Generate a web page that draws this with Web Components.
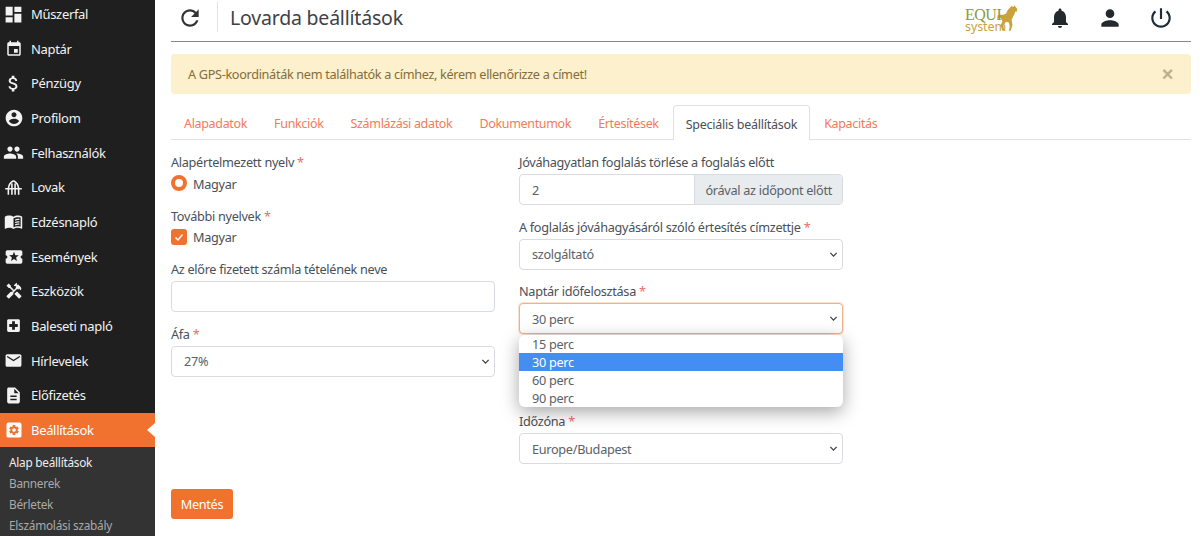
<!DOCTYPE html>
<html lang="hu">
<head>
<meta charset="utf-8">
<title>Lovarda beállítások</title>
<style>
html,body{margin:0;padding:0;height:536px;overflow:hidden;background:#fff}
body{font-family:"Noto Sans","Open Sans",sans-serif;font-size:13px;color:#495057;letter-spacing:-.3px}
</style>
</head>
<body>
<app-shell>
  <side-bar slot="side">
    <nav-item icon="dashboard" size="21">Műszerfal</nav-item>
    <nav-item icon="event" size="18">Naptár</nav-item>
    <nav-item icon="money" size="21">Pénzügy</nav-item>
    <nav-item icon="account" size="20">Profilom</nav-item>
    <nav-item icon="people" size="21">Felhasználók</nav-item>
    <nav-item icon="barn" size="19">Lovak</nav-item>
    <nav-item icon="book" size="19">Edzésnapló</nav-item>
    <nav-item icon="ticket" size="20">Események</nav-item>
    <nav-item icon="tools" size="18">Eszközök</nav-item>
    <nav-item icon="hospital" size="17">Baleseti napló</nav-item>
    <nav-item icon="mail" size="19">Hírlevelek</nav-item>
    <nav-item icon="doc" size="19">Előfizetés</nav-item>
    <nav-item icon="gear" size="18" active>Beállítások</nav-item>
    <sub-menu>
      <sub-item active>Alap beállítások</sub-item>
      <sub-item>Bannerek</sub-item>
      <sub-item>Bérletek</sub-item>
      <sub-item>Elszámolási szabály</sub-item>
    </sub-menu>
  </side-bar>
  <top-bar>Lovarda beállítások</top-bar>
  <alert-box>A GPS-koordináták nem találhatók a címhez, kérem ellenőrizze a címet!</alert-box>
  <tab-bar>
    <tab-link>Alapadatok</tab-link>
    <tab-link>Funkciók</tab-link>
    <tab-link>Számlázási adatok</tab-link>
    <tab-link>Dokumentumok</tab-link>
    <tab-link>Értesítések</tab-link>
    <tab-link active>Speciális beállítások</tab-link>
    <tab-link>Kapacitás</tab-link>
  </tab-bar>
  <settings-form>
    <form-field slot="left" label="Alapértelmezett nyelv" required><choice-mark type="radio">Magyar</choice-mark></form-field>
    <form-field slot="left" label="További nyelvek" required><choice-mark type="check">Magyar</choice-mark></form-field>
    <form-field slot="left" label="Az előre fizetett számla tételének neve"><text-box></text-box></form-field>
    <form-field slot="left" label="Áfa" required><select-box>27%</select-box></form-field>

    <form-field slot="right" label="Jóváhagyatlan foglalás törlése a foglalás előtt"><text-box addon="órával az időpont előtt">2</text-box></form-field>
    <form-field slot="right" label="A foglalás jóváhagyásáról szóló értesítés címzettje" required><select-box>szolgáltató</select-box></form-field>
    <form-field slot="right" label="Naptár időfelosztása" required class="open">
      <select-box focused>30 perc
        <drop-list slot="menu">
          <drop-option>15 perc</drop-option>
          <drop-option selected>30 perc</drop-option>
          <drop-option>60 perc</drop-option>
          <drop-option>90 perc</drop-option>
        </drop-list>
      </select-box>
    </form-field>
    <form-field slot="right" label="Időzóna" required><select-box>Europe/Budapest</select-box></form-field>
    <save-button slot="action">Mentés</save-button>
  </settings-form>
</app-shell>

<script>
const ICONS = {
  dashboard: '<path d="M3 13h8V3H3v10zm0 8h8v-6H3v6zm10 0h8V11h-8v10zm0-18v6h8V3h-8z"/>',
  event: '<path d="M17 12h-5v5h5v-5zM16 1v2H8V1H6v2H5c-1.11 0-1.99.9-1.99 2L3 19c0 1.1.89 2 2 2h14c1.1 0 2-.9 2-2V5c0-1.1-.9-2-2-2h-1V1h-2zm3 18H5V8h14v11z"/>',
  money: '<path d="M11.8 10.9c-2.27-.59-3-1.2-3-2.15 0-1.09 1.01-1.85 2.7-1.85 1.78 0 2.44.85 2.5 2.1h2.21c-.07-1.72-1.12-3.3-3.21-3.81V3h-3v2.16c-1.94.42-3.5 1.68-3.5 3.61 0 2.31 1.91 3.46 4.7 4.13 2.5.6 3 1.48 3 2.41 0 .69-.49 1.79-2.7 1.79-2.06 0-2.87-.92-2.98-2.1h-2.2c.12 2.19 1.76 3.42 3.68 3.83V21h3v-2.15c1.95-.37 3.5-1.5 3.5-3.55 0-2.84-2.43-3.81-4.7-4.4z"/>',
  account: '<path d="M12 2C6.48 2 2 6.48 2 12s4.48 10 10 10 10-4.48 10-10S17.52 2 12 2zm0 3c1.66 0 3 1.34 3 3s-1.34 3-3 3-3-1.34-3-3 1.34-3 3-3zm0 14.2c-2.5 0-4.71-1.28-6-3.22.03-1.99 4-3.08 6-3.08 1.99 0 5.97 1.09 6 3.08-1.29 1.94-3.5 3.22-6 3.22z"/>',
  people: '<path d="M16 11c1.66 0 2.99-1.34 2.99-3S17.66 5 16 5c-1.66 0-3 1.34-3 3s1.34 3 3 3zm-8 0c1.66 0 2.99-1.34 2.99-3S9.66 5 8 5C6.34 5 5 6.34 5 8s1.34 3 3 3zm0 2c-2.33 0-7 1.17-7 3.5V19h14v-2.5c0-2.33-4.67-3.5-7-3.5zm8 0c-.29 0-.62.02-.97.05 1.16.84 1.97 1.97 1.97 3.45V19h6v-2.5c0-2.33-4.67-3.5-7-3.5z"/>',
  barn: '<path fill="none" stroke="currentColor" stroke-width="2" d="M12 3.500C8 5.500 6 9 5.500 13v8M12 3.500C16 5.500 18 9 18.500 13v8M1.500 13.500h21M10 7v14M14 7v14"/>',
  book: '<path d="M21 5c-1.11-.35-2.33-.5-3.5-.5-1.95 0-4.05.4-5.5 1.5-1.45-1.1-3.55-1.5-5.5-1.5S2.45 4.9 1 6v14.65c0 .25.25.5.5.5.1 0 .15-.05.25-.05C3.1 20.45 5.05 20 6.5 20c1.95 0 4.05.4 5.5 1.5 1.35-.85 3.8-1.5 5.5-1.5 1.65 0 3.35.3 4.75 1.05.1.05.15.05.25.05.25 0 .5-.25.5-.5V6c-.6-.45-1.25-.75-2-1zm0 13.5c-1.1-.35-2.3-.5-3.5-.5-1.7 0-4.15.65-5.5 1.5V8c1.35-.85 3.8-1.5 5.5-1.5 1.2 0 2.4.15 3.5.5v11.5z"/><path d="M14 9.500c1.100-.5 3.400-1 5.500-.8v1.500c-1.900-.2-4.200.2-5.500.8V9.500zm0 3c1.100-.5 3.400-1 5.500-.8v1.500c-1.900-.2-4.200.2-5.500.8v-1.500zm0 3c1.100-.5 3.400-1 5.500-.8v1.500c-1.900-.2-4.200.2-5.500.8v-1.500z"/>',
  ticket: '<path d="M20 12c0-1.1.9-2 2-2V6c0-1.1-.9-2-2-2H4c-1.1 0-1.99.9-1.99 2v4c1.1 0 1.99.9 1.99 2s-.89 2-2 2v4c0 1.1.9 2 2 2h16c1.1 0 2-.9 2-2v-4c-1.1 0-2-.9-2-2zm-4.42 4.8L12 14.5l-3.58 2.3 1.08-4.12-3.29-2.69 4.24-.25L12 5.8l1.54 3.95 4.24.25-3.29 2.69 1.09 4.11z"/>',
  tools: '<path d="M21.67 18.17l-5.3-5.3h-.99l-2.54 2.54v.99l5.3 5.3c.39.39 1.02.39 1.41 0l2.12-2.12c.39-.38.39-1.02 0-1.41z"/><path d="M17.34 10.19l1.41-1.41 2.12 2.12c1.17-1.17 1.17-3.07 0-4.24l-3.54-3.54-1.41 1.41V1.71l-.7-.71-3.54 3.54.71.71h2.83l-1.41 1.41 1.06 1.06-2.89 2.89-4.13-4.13V5.06L4.83 2.04 2 4.87 5.03 7.9h1.41l4.13 4.13-.85.85H7.6l-5.3 5.3c-.39.39-.39 1.02 0 1.41l2.12 2.12c.39.39 1.02.39 1.41 0l5.3-5.3v-2.12l5.15-5.15 1.06 1.05z"/>',
  hospital: '<path d="M19 3H5c-1.1 0-1.99.9-1.99 2L3 19c0 1.1.9 2 2 2h14c1.1 0 2-.9 2-2V5c0-1.1-.9-2-2-2zm-1 11h-4v4h-4v-4H6v-4h4V6h4v4h4v4z"/>',
  mail: '<path d="M20 4H4c-1.1 0-1.99.9-1.99 2L2 18c0 1.1.9 2 2 2h16c1.1 0 2-.9 2-2V6c0-1.1-.9-2-2-2zm0 4l-8 5-8-5V6l8 5 8-5v2z"/>',
  doc: '<path d="M14 2H6c-1.1 0-1.99.9-1.99 2L4 20c0 1.1.89 2 1.99 2H18c1.1 0 2-.9 2-2V8l-6-6zm2 16H8v-2h8v2zm0-4H8v-2h8v2zm-3-5V3.5L18.5 9H13z"/>',
  gear: '<rect x="2" y="2" width="20" height="20" rx="2.500"/><path fill="#f1722f" transform="translate(12 12) scale(.68) translate(-12 -12)" d="M19.14 12.94c.04-.3.06-.61.06-.94 0-.32-.02-.64-.07-.94l2.03-1.58c.18-.14.23-.41.12-.61l-1.92-3.32c-.12-.22-.37-.29-.59-.22l-2.39.96c-.5-.38-1.03-.7-1.62-.94L14.4 2.81c-.04-.24-.24-.41-.48-.41h-3.84c-.24 0-.43.17-.47.41L9.25 5.35c-.59.24-1.13.57-1.62.94L5.24 5.33c-.22-.08-.47 0-.59.22L2.74 8.87c-.12.21-.08.47.12.61l2.03 1.58c-.05.3-.09.63-.09.94s.02.64.07.94l-2.03 1.58c-.18.14-.23.41-.12.61l1.92 3.32c.12.22.37.29.59.22l2.39-.96c.5.38 1.03.7 1.62.94l.36 2.54c.05.24.24.41.48.41h3.84c.24 0 .44-.17.47-.41l.36-2.54c.59-.24 1.13-.56 1.62-.94l2.39.96c.22.08.47 0 .59-.22l1.92-3.32c.12-.22.07-.47-.12-.61l-2.01-1.58zM12 15.600c-1.980 0-3.600-1.620-3.600-3.600s1.620-3.600 3.600-3.600 3.600 1.620 3.600 3.600-1.620 3.600-3.600 3.600z"/>',
  refresh: '<path d="M17.65 6.35C16.2 4.9 14.21 4 12 4c-4.42 0-7.99 3.58-7.99 8s3.57 8 7.99 8c3.73 0 6.84-2.55 7.73-6h-2.08c-.82 2.33-3.04 4-5.65 4-3.31 0-6-2.69-6-6s2.69-6 6-6c1.66 0 3.14.69 4.22 1.78L13 11h7V4l-2.35 2.35z"/>',
  bell: '<path d="M12 22c1.1 0 2-.9 2-2h-4c0 1.1.89 2 2 2zm6-6v-5c0-3.07-1.64-5.64-4.5-6.32V4c0-.83-.67-1.5-1.5-1.5s-1.5.67-1.5 1.5v.68C7.63 5.36 6 7.92 6 11v5l-2 2v1h16v-1l-2-2z"/>',
  person: '<path d="M12 12c2.21 0 4-1.79 4-4s-1.79-4-4-4-4 1.79-4 4 1.79 4 4 4zm0 2c-2.67 0-8 1.34-8 4v2h16v-2c0-2.66-5.33-4-8-4z"/>',
  power: '<path d="M13 3h-2v10h2V3zm4.83 2.17l-1.42 1.42C17.99 7.86 19 9.81 19 12c0 3.87-3.13 7-7 7s-7-3.13-7-7c0-2.19 1.01-4.14 2.58-5.42L6.17 5.17C4.23 6.82 3 9.26 3 12c0 4.97 4.03 9 9 9s9-4.03 9-9c0-2.74-1.23-5.18-3.17-6.83z"/>'
};

function svgIcon(name, size) {
  return `<svg width="${size}" height="${size}" viewBox="0 0 24 24" fill="currentColor" aria-hidden="true">${ICONS[name]}</svg>`;
}

//small helper so every element below stays a few lines
function define(tag, css, html) {
  customElements.define(tag, class extends HTMLElement {
    constructor() {
      super();
      this.attachShadow({ mode: "open" });
    }
    connectedCallback() {
      const markup = typeof html === "function" ? html(this) : html;
      this.shadowRoot.innerHTML = `<style>${css}</style>${markup}`;
    }
  });
}

define("app-shell", `
  :host{display:flex;height:536px;overflow:hidden}
  .side{flex:none;width:155px}
  .main{flex:1;min-width:0;padding:0 9px 0 16px;position:relative}
`, `<div class="side"><slot name="side"></slot></div><div class="main"><slot></slot></div>`);

define("side-bar", `
  :host{display:block;width:155px;height:536px;background:#1f1f1f;overflow:hidden;color:#fff}
  .in{margin-top:-3.200px}
`, `<div class="in"><slot></slot></div>`);

define("nav-item", `
  :host{display:flex;align-items:center;height:34.650px;padding-left:2px;gap:6px;color:#f2f2f2;position:relative;font-size:13px;letter-spacing:-.32px}
  :host([active]){background:#f1722f;color:#fff}
  .ic{flex:none;width:23px;display:flex;justify-content:center}
  :host([active])::after{content:"";position:absolute;right:0;top:10px;border:7px solid transparent;border-left:0;border-right:8px solid #fff}
`, el => `<span class="ic">${svgIcon(el.getAttribute("icon"), el.getAttribute("size"))}</span><span><slot></slot></span>`);

define("sub-menu", `
  :host{display:block;background:#333;padding:4.500px 0 20px 9px}
`, `<slot></slot>`);

define("sub-item", `
  :host{display:block;height:21px;line-height:21px;font-size:11.800px;color:#aaa;letter-spacing:-.25px}
  :host([active]){color:#eee}
`, `<slot></slot>`);

define("top-bar", `
  :host{display:flex;align-items:center;height:41px;border-bottom:1px solid #888;padding-left:6px;color:#333}
  .refresh{display:flex;margin-top:-5px}
  .divider{width:1px;height:30px;background:#e4e4e4;margin:-7px 12px 0 14px}
  h1{flex:1;margin:-6px 0 0;font-weight:400;font-size:19.500px;color:#3d4348;letter-spacing:-.2px}
  .logo{position:relative;width:54px;height:34px;margin:-6px 30px 0 0;font-family:"Liberation Serif",serif}
  .equi{position:absolute;left:1px;top:8px;font-size:16px;line-height:12px;color:#8a9a3d;letter-spacing:-.5px}
  .sys{position:absolute;left:1px;top:20px;font:12.500px/12px "Noto Sans",sans-serif;color:#c9a43c;letter-spacing:-.1px}
  .logo svg{position:absolute;left:32px;top:2px}
  .ic{display:flex;color:#24292e}
  .bell{margin:-5px 0 0 0}
  .person{margin:-5px 0 0 25px}
  .power{margin:-5px 17px 0 25px;color:#1f2d3a}
`, `
  <span class="refresh">${svgIcon("refresh", 26)}</span>
  <span class="divider"></span>
  <h1><slot></slot></h1>
  <span class="logo">
    <svg width="22" height="30" viewBox="0 0 24 30"><path fill="#c9a23a" d="M23 5 20 1 19 3 17 2 13 6 11 10C8 12 4 11 2 12L1 16 3 15 4 14C6 17 7 17 7 19L5 23 7 29 9 29 8 23 11 19 14 20 15 24 14 29 16 29 18 23 17 17 20 11 21 8 23 8Z"/></svg>
    <span class="equi">EQUI</span><span class="sys">system</span>
  </span>
  <span class="ic bell">${svgIcon("bell", 24)}</span>
  <span class="ic person">${svgIcon("person", 26)}</span>
  <span class="ic power">${svgIcon("power", 26)}</span>
`);

define("alert-box", `
  :host{display:flex;align-items:center;justify-content:space-between;height:40px;margin-top:12px;padding:0 17px;background:#fcf0cd;border-radius:4px;color:#856d3b;font-size:12.700px;letter-spacing:-.33px}
  .x{font-size:20px;line-height:1;color:#bdb08a;margin-right:1px;font-family:"Liberation Sans",sans-serif;font-weight:700}
`, `<span><slot></slot></span><span class="x">×</span>`);

define("tab-bar", `
  :host{display:flex;margin-top:12px;height:33px;border-bottom:1px solid #dee2e6}
`, `<slot></slot>`);

define("tab-link", `
  :host{display:flex;align-items:center;height:31px;padding:2px 12px 0;margin-right:1px;border:1px solid transparent;border-bottom:0;border-radius:4px 4px 0 0;color:#f47b57;font-size:12.500px;letter-spacing:-.33px;margin-top:-1px}
  :host([active]){color:#495057;border-color:#dee2e6;background:#fff;height:32px;margin-bottom:-1px;letter-spacing:-.25px}
`, `<slot></slot>`);

define("settings-form", `
  :host{display:block}
  .cols{display:flex;gap:24px;padding-top:14px}
  .col{width:324px;display:flex;flex-direction:column}
  .act{margin-top:11.500px}
`, `<div class="cols"><div class="col"><slot name="left"></slot></div><div class="col"><slot name="right"></slot></div></div><div class="act"><slot name="action"></slot></div>`);

define("form-field", `
  :host{display:block;margin-bottom:13.500px;position:relative}
  :host(.open){margin-bottom:79px}
  label{display:block;font-size:12.700px;line-height:17px;color:#495057;margin-bottom:3px}
  b{font-weight:400;color:#f0696a}
`, el => `<label>${el.getAttribute("label")}${el.hasAttribute("required") ? ' <b>*</b>' : ''}</label><slot></slot>`);

define("choice-mark", `
  :host{display:flex;align-items:center;gap:6px;height:17px;margin:4px 0 2px;font-size:12.700px}
  .radio{width:16px;height:16px;border:4px solid #f1722f;border-radius:50%;box-sizing:border-box;background:#fff;margin-top:-1px}
  .check{width:16px;height:16px;border-radius:3px;background:#f1722f;display:flex;align-items:center;justify-content:center;margin-top:-1px}
`, el => el.getAttribute("type") === "radio"
  ? `<span class="radio"></span><span><slot></slot></span>`
  : `<span class="check"><svg width="10" height="10" viewBox="0 0 10 10"><path d="M1.500 5.500 4 8l4.500-5.500" fill="none" stroke="#fff" stroke-width="1.500"/></svg></span><span><slot></slot></span>`);

define("text-box", `
  :host{display:flex;height:31px;border:1px solid #d8dce0;border-radius:4px;box-sizing:border-box;background:#fff;font-size:12.700px;color:#5a6168;overflow:hidden}
  .val{flex:1;padding:0 12px;display:flex;align-items:center}
  .add{display:flex;align-items:center;padding:0 10px;background:#e9ecef;border-left:1px solid #d8dce0}
`, el => `<span class="val"><slot></slot></span>${el.getAttribute("addon") ? `<span class="add">${el.getAttribute("addon")}</span>` : ""}`);

define("select-box", `
  :host{display:flex;align-items:center;position:relative;height:31px;padding:0 12px;border:1px solid #d8dce0;border-radius:4px;box-sizing:border-box;background:#fff;font-size:12.700px;color:#5a6168}
  :host([focused]){border-color:#f0b08c;box-shadow:0 0 0 1px #fbe3d4}
  svg{position:absolute;right:4px;top:10px}
  .menu{position:absolute;left:-1px;right:-1px;top:31px;z-index:5}
`, `<span><slot></slot></span><svg width="9" height="9" viewBox="0 0 10 10"><path d="M1.500 3.200 5 6.800l3.500-3.600" fill="none" stroke="#444" stroke-width="1.500"/></svg><div class="menu"><slot name="menu"></slot></div>`);

define("drop-list", `
  :host{display:block;background:#fff;border-radius:6px;box-shadow:0 5px 18px rgba(0,0,0,.35);overflow:hidden}
`, `<slot></slot>`);

define("drop-option", `
  :host{display:block;height:18px;line-height:18px;padding-left:13px;font-size:12.700px;color:#5a6168}
  :host([selected]){background:#438df3;color:#fff}
`, `<slot></slot>`);

define("save-button", `
  :host{display:inline-flex;align-items:center;justify-content:center;width:62px;height:30px;background:#f1722f;color:#fff;border-radius:3px;font-size:12.700px}
`, `<slot></slot>`);
</script>
</body>
</html>
